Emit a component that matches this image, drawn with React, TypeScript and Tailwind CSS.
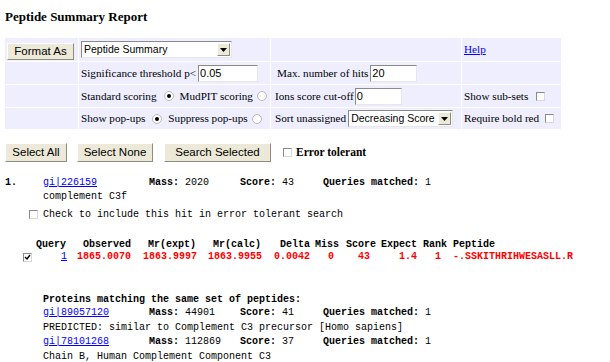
import React from "react";

const serif = "font-['Liberation_Serif','Times_New_Roman',serif]";
const sans = "font-['Liberation_Sans',Arial,sans-serif]";
const mono = "font-['Liberation_Mono','Courier_New',monospace]";

function Radio({ checked }: { checked?: boolean }) {
  return (
    <span className="inline-flex w-[10px] h-[10px] rounded-full border border-[#b8b8b8] bg-white items-center justify-center shrink-0">
      {checked && <span className="block w-[4px] h-[4px] rounded-full bg-black" />}
    </span>
  );
}

function Check({ checked }: { checked?: boolean }) {
  return (
    <span className="inline-flex w-[9px] h-[9px] border border-t-[#8a8a8a] border-l-[#8a8a8a] border-r-[#d8d8d8] border-b-[#d8d8d8] bg-white items-center justify-center shrink-0">
      {checked && (
        <svg width="7" height="7" viewBox="0 0 7 7">
          <path d="M1 3 L3 5 L6 1" stroke="#000" strokeWidth="1.4" fill="none" />
        </svg>
      )}
    </span>
  );
}

function Btn({ children, w }: { children: React.ReactNode; w: string }) {
  return (
    <span
      className={`inline-flex ${w} items-center justify-center bg-[#ece9d8] border border-t-white border-l-white border-r-[#8f8d80] border-b-[#8f8d80] text-[11.5px] text-black whitespace-nowrap ${sans}`}
    >
      {children}
    </span>
  );
}

function Input({ value, w }: { value: string; w: string }) {
  return (
    <span
      className={`inline-flex ${w} h-[17px] items-center bg-white border border-t-[#8a8a8a] border-l-[#8a8a8a] border-r-[#e6e6e6] border-b-[#e6e6e6] pl-[1px] text-[11px] text-black shrink-0 ${sans}`}
    >
      {value}
    </span>
  );
}

function Select({ value, w }: { value: string; w: string }) {
  return (
    <span
      className={`inline-flex ${w} h-[17px] items-center justify-between bg-white border border-t-[#8a8a8a] border-l-[#8a8a8a] border-r-[#e6e6e6] border-b-[#e6e6e6] pl-[2px] pr-[1px] text-[10.5px] text-black shrink-0 whitespace-nowrap ${sans}`}
    >
      <span>{value}</span>
      <span className="inline-flex w-[13px] h-[13px] items-center justify-center bg-[#ece9d8] border border-t-white border-l-white border-r-[#8f8d80] border-b-[#8f8d80]">
        <svg width="7" height="4" viewBox="0 0 7 4">
          <path d="M0 0 H7 L3.5 4 Z" fill="#000" />
        </svg>
      </span>
    </span>
  );
}

function Cell({ children, className = "" }: { children?: React.ReactNode; className?: string }) {
  return <div className={`bg-[#eeeeff] flex items-center whitespace-nowrap ${className}`}>{children}</div>;
}

function HitLine({ gi, mass, score, queries }: { gi: string; mass: string; score: string; queries: string }) {
  return (
    <div className="flex whitespace-pre">
      <span className="w-[106px] text-[#0000ff] underline">{gi}</span>
      <span className="w-[91px]">
        <b>Mass:</b> {mass}
      </span>
      <span className="w-[83px]">
        <b>Score:</b> {score}
      </span>
      <span>
        <b>Queries matched:</b> {queries}
      </span>
    </div>
  );
}

export default function App() {
  const cols = "grid grid-cols-[13px_41px_66px_65px_66px_41px_31px_35px_42px_30px_150px]";
  return (
    <div className="w-[610px] h-[362px] overflow-hidden bg-white text-black">
      <div className="pl-[5px] pt-[9px]">
        <div className={`${serif} font-bold text-[13px] leading-[16px] h-[29px]`}>Peptide Summary Report</div>

        {/* form table */}
        <div
          className={`grid grid-cols-[73px_191px_190px_99px] grid-rows-[23px_22px_22px_21px] gap-px bg-white w-[556px] ${serif} text-[11.2px]`}
        >
          <Cell className="pl-[2px] pt-[4px]">
            <Btn w="w-[67px] h-[17px]">Format As</Btn>
          </Cell>
          <Cell className="pl-[2px]">
            <Select value="Peptide Summary" w="w-[151px]" />
          </Cell>
          <Cell />
          <Cell className="pl-[2px]">
            <span className="text-[#0000ff] underline">Help</span>
          </Cell>

          <Cell />
          <Cell className="pl-[2px] gap-[2px]">
            <span>Significance threshold p&lt;</span>
            <Input value="0.05" w="w-[60px]" />
          </Cell>
          <Cell className="pl-[6px] gap-[2px]">
            <span>Max. number of hits</span>
            <Input value="20" w="w-[47px]" />
          </Cell>
          <Cell />

          <Cell />
          <Cell className="pl-[2px]">
            <span>Standard scoring</span>
            <span className="ml-[7px] mr-[6px] flex">
              <Radio checked />
            </span>
            <span>MudPIT scoring</span>
            <span className="ml-[4px] flex">
              <Radio />
            </span>
          </Cell>
          <Cell className="pl-[4px] gap-[1px]">
            <span>Ions score cut-off</span>
            <Input value="0" w="w-[47px]" />
          </Cell>
          <Cell className="pl-[2px]">
            <span>Show sub-sets</span>
            <span className="ml-[8px] flex">
              <Check />
            </span>
          </Cell>

          <Cell />
          <Cell className="pl-[2px]">
            <span>Show pop-ups</span>
            <span className="ml-[7px] mr-[6px] flex">
              <Radio checked />
            </span>
            <span>Suppress pop-ups</span>
            <span className="ml-[4px] flex">
              <Radio />
            </span>
          </Cell>
          <Cell className="pl-[4px] gap-[2px]">
            <span>Sort unassigned</span>
            <Select value="Decreasing Score" w="w-[105px]" />
          </Cell>
          <Cell className="pl-[2px]">
            <span>Require bold red</span>
            <span className="ml-[6px] flex">
              <Check />
            </span>
          </Cell>
        </div>

        {/* buttons */}
        <div className="flex items-center mt-[14px] h-[19px]">
          <Btn w="w-[62px] h-[19px]">Select All</Btn>
          <span className="ml-[10px] flex">
            <Btn w="w-[76px] h-[19px]">Select None</Btn>
          </span>
          <span className="ml-[11px] flex">
            <Btn w="w-[107px] h-[19px]">Search Selected</Btn>
          </span>
          <span className="ml-[12px] flex">
            <Check />
          </span>
          <span className={`${serif} font-bold text-[11.5px] ml-[4px] whitespace-nowrap`}>Error tolerant</span>
        </div>
      </div>

      <div className={`${mono} text-[10px] pl-[5px] mt-[14px] whitespace-pre`}>
        <div className="flex h-[14px] leading-[14px]">
          <b className="w-[38px]">1.</b>
          <HitLine gi="gi|226159" mass="2020" score="43" queries="1" />
        </div>
        <div className="h-[13px] leading-[13px] pl-[38px]">complement C3f</div>
        <div className="h-[23px] flex items-center pl-[24px]">
          <Check />
          <span className="ml-[5px] leading-[23px]">Check to include this hit in error tolerant search</span>
        </div>

        <div className="h-[13px]" />
        <div className={`${cols} pl-[18px] h-[12px] leading-[12px] font-bold`}>
          <span />
          <span>Query</span>
          <span className="pl-[6px]">Observed</span>
          <span className="pl-[5px]">Mr(expt)</span>
          <span className="pl-[5px]">Mr(calc)</span>
          <span className="pl-[6px]">Delta</span>
          <span>Miss</span>
          <span>Score</span>
          <span>Expect</span>
          <span>Rank</span>
          <span>Peptide</span>
        </div>
        <div className={`${cols} pl-[18px] h-[12px] leading-[12px] font-bold text-[#ff0000] items-center`}>
          <span className="flex items-center">
            <Check checked />
          </span>
          <span className="pl-[25px] text-[#0000ff] underline font-normal">1</span>
          <span>1865.0070</span>
          <span>1863.9997</span>
          <span>1863.9955</span>
          <span>0.0042</span>
          <span className="pl-[13px]">0</span>
          <span className="pl-[12px]">43</span>
          <span className="pl-[18px]">1.4</span>
          <span className="pl-[12px]">1</span>
          <span>-.SSKITHRIHWESASLL.R</span>
        </div>

        <div className="h-[30px]" />
        <div className="pl-[38px]">
          <div className="h-[13px] leading-[13px] font-bold">Proteins matching the same set of peptides:</div>
          <div className="h-[14px] leading-[14px]">
            <HitLine gi="gi|89057120" mass="44901" score="41" queries="1" />
          </div>
          <div className="h-[15px] leading-[15px]">PREDICTED: similar to Complement C3 precursor [Homo sapiens]</div>
          <div className="h-[14px] leading-[14px]">
            <HitLine gi="gi|78101268" mass="112869" score="37" queries="1" />
          </div>
          <div className="h-[15px] leading-[15px]">Chain B, Human Complement Component C3</div>
        </div>
      </div>
    </div>
  );
}
